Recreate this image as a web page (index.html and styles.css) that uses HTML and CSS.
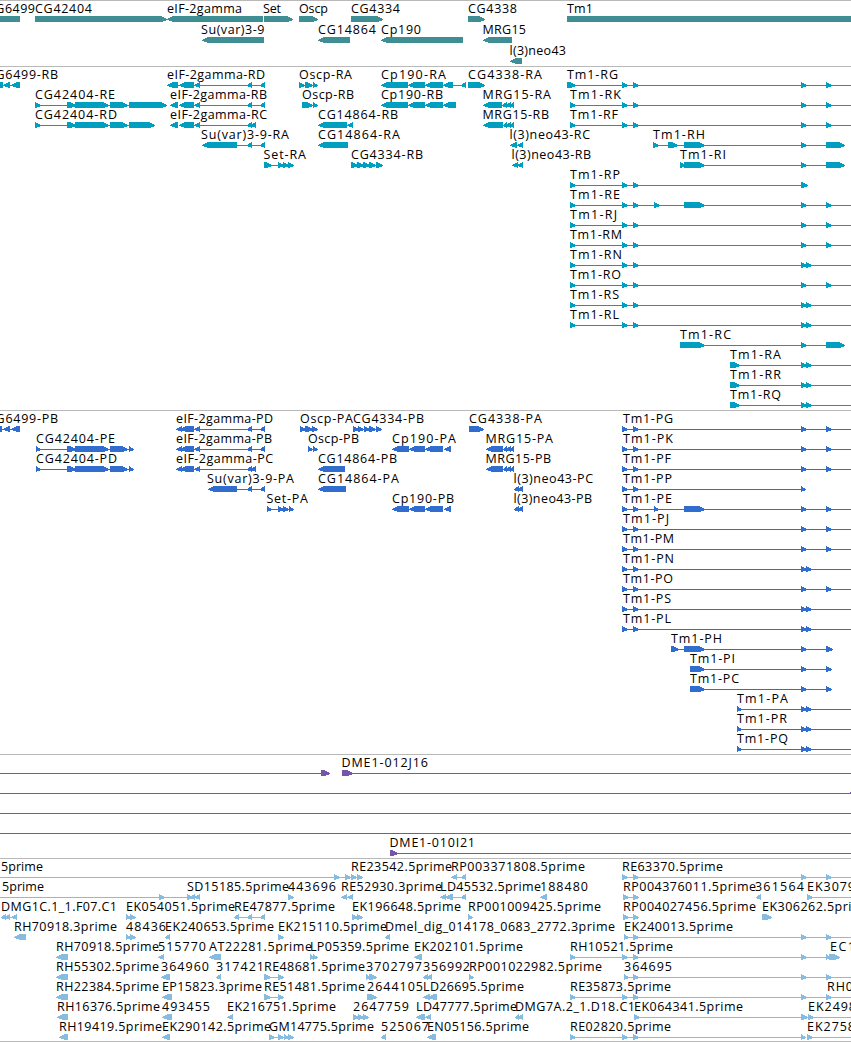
FILE: index.html
```html
<!DOCTYPE html>
<html lang="en">
<head>
<meta charset="utf-8">
<title>Genome browser</title>
<link rel="stylesheet" href="styles.css">
</head>
<body>
<main class="browser">
  <section class="track track-genes" data-track="genes"></section>
  <section class="track track-transcripts" data-track="transcripts"></section>
  <section class="track track-proteins" data-track="proteins"></section>
  <section class="track track-bacs" data-track="bacs"></section>
  <section class="track track-ests" data-track="ests"></section>
</main>
<script src="tracks.js"></script>
</body>
</html>
```
FILE: styles.css
```css
body {
  margin: 0;
  background: #fff;
}
.browser {
  display: flex;
  flex-direction: column;
  width: 851px;
  height: 1042px;
  overflow: hidden;
}
.track {
  display: flex;
  flex-direction: column;
  flex: none;
  border-top: 1px solid #b9b9b9;
  padding-bottom: 3px;
}
.row {
  display: block;
  flex: none;
  width: 851px;
  height: 20px;
  overflow: visible;
  fill: currentColor;
}
.track-genes { color: #3f8e94; padding-bottom: 2px; }
.track-genes .row { height: 21px; }
.track-transcripts { color: #009fc0; }
.track-proteins { color: #306dce; }
.track-bacs { color: #7656a8; }
.track-ests { color: #88bcde; padding-bottom: 2px; border-bottom: 1px solid #b9b9b9; }
.label {
  fill: #000;
  font-family: "Open Sans", "Noto Sans", sans-serif;
  font-size: 12.5px;
}
.shape { shape-rendering: crispEdges; }
```
FILE: tracks.js
```js
// Row tokens, separated by spaces:
//   x1:x2:name  label      a>b / a<b  stranded exon
//   a#b         plain bar  a-b        connecting line
const TM = '622>628 633>639';
const END = '801>807 826>832';
const PAIR = '801>807 806>812';
const EIF = '179<194 194<200 167-265 247<252 260<265';
const PEIF = '176<182 180<194 194<200';

const tracks = {
  genes: [
    '-13:35:CG6499 35:92:CG42404 167:242:eIF-2gamma 263:281:Set 299:328:Oscp 351:400:CG4334 468:517:CG4338 567:593:Tm1 0#20 35>167 167<263 264>293 299>318 351>383 468>485 567#851',
    '201:264.5:Su(var)3-9 318:376:CG14864 381:421:Cp190 482.5:526:MRG15 202<264 318<350 381<463 483<512',
    '509.5:566:l(3)neo43 510<522'
  ],
  transcripts: [
    `-13:58:CG6499-RB 167:265:eIF-2gamma-RD 299:352:Oscp-RA 381:446:Cp190-RA 468:542:CG4338-RA 567:618:Tm1-RG 0-20 0#3 3<10 11<20 167<178 ${EIF} 299>305 305>313 313>318 381<408 408<425 425<443 443<453 453-466 461<466 468>485 567>576 567-851 ${TM} ${END}`,
    `35:115:CG42404-RE 170:267:eIF-2gamma-RB 302:354:Oscp-RB 381:443:Cp190-RB 482.5:551:MRG15-RA 570:621:Tm1-RK 35-167 35>41 67>76 75>109 110>128 129>167 170<178 179<194 194<200 194-265 247<252 260<265 302>313 313>318 381<408 408<425 425<443 443<456 483<502 502<507 506<511 510<514 570>576 570-851 ${TM} ${END}`,
    `35:117:CG42404-RD 170:267:eIF-2gamma-RC 318:398:CG14864-RB 482.5:549:MRG15-RB 570:618:Tm1-RF 35-155 35>41 67>76 75>109 110>128 129>155 170<178 179<194 194<200 194-256 247<252 251<256 318<347 347<353 483<503 503<507 506<511 510<514 570>576 570-851 ${TM} ${END}`,
    `201:289:Su(var)3-9-RA 318:400:CG14864-RA 509.5:590:l(3)neo43-RC 653:705:Tm1-RH 202<237 237-265 247<252 260<265 318<348 510<517 517<523 653-845 653>659 668>678 684>705 801>807 826>845`,
    '263.5:306:Set-RA 351:423:CG4334-RB 511.5:591:l(3)neo43-RB 680:726:Tm1-RI 264-294 264>272 278>284 283>289 288>294 351>358 357>364 363>370 369>376 376>383 512<518 517<523 680-845 680>686 684>705 801>807 826>845',
    `570:620:Tm1-RP 570-808 570>576 ${TM} 801>808`,
    `570:620:Tm1-RE 570-851 570>576 ${TM} 654>660 684>705 ${END}`,
    `570:617:Tm1-RJ 570-851 570>576 ${TM} ${END}`,
    `570:622:Tm1-RM 570-851 570>576 ${TM} ${END}`,
    `570:622:Tm1-RN 570-851 570>576 ${TM} ${PAIR}`,
    `570:621:Tm1-RO 570-851 570>576 ${TM} ${END}`,
    `570:619:Tm1-RS 570-851 570>576 ${TM} ${PAIR}`,
    `570:619:Tm1-RL 570-851 570>576 ${TM} ${PAIR}`,
    '680:731:Tm1-RC 680-845 680>705 801>807 826>845',
    `730:781:Tm1-RA 730-851 730>740 ${PAIR}`,
    `730:781:Tm1-RR 730-851 730>740 ${PAIR}`,
    `730:781:Tm1-RQ 730-851 730>740 ${PAIR}`
  ],
  proteins: [
    `-13:58:CG6499-PB 176:273:eIF-2gamma-PD 300:353:Oscp-PA 353:424:CG4334-PB 469:542:CG4338-PA 623:673:Tm1-PG 0-20 0#2 3<10 11<20 ${PEIF} 194-265 247<252 260<265 300>306 305>313 312>318 353>359 358>364 364>370 369>376 376>382 469>484 623-851 ${TM} ${END}`,
    `36:115:CG42404-PE 176:272:eIF-2gamma-PB 308:359:Oscp-PB 392:456:Cp190-PA 485.5:553:MRG15-PA 623:673:Tm1-PK 36-134 36>41 67>76 75>109 110>128 129>134 ${PEIF} 194-265 247<252 260<265 308>313 313>318 392<409 409<425 425<443 444<451 486<503 503<507 506<511 510<514 623-851 ${TM} ${END}`,
    `36:117:CG42404-PD 176:273:eIF-2gamma-PC 318:397:CG14864-PB 485.5:551:MRG15-PB 623:671:Tm1-PF 36-134 36>41 67>76 75>109 110>128 129>134 ${PEIF} 194-256 247<252 251<256 318<345 486<503 503<507 506<511 510<514 623-851 ${TM} ${END}`,
    `207:294:Su(var)3-9-PA 318:399:CG14864-PA 513.5:593:l(3)neo43-PC 623:672:Tm1-PP 208<237 237-265 247<252 260<265 318<346 514<519 518<523 623-806 ${TM} 801>806`,
    `266.5:308:Set-PA 392:454:Cp190-PB 513.5:592:l(3)neo43-PB 623:672:Tm1-PE 267-294 267>272 278>284 283>289 289>294 392<409 409<425 425<443 444<451 514<519 518<523 623-851 ${TM} 654>659 684>705 ${END}`,
    `623:669:Tm1-PJ 623-851 ${TM} ${END}`,
    `623:674:Tm1-PM 623-851 ${TM} ${END}`,
    `623:674:Tm1-PN 623-851 ${TM} ${PAIR}`,
    `623:673:Tm1-PO 623-851 ${TM} ${END}`,
    `623:671:Tm1-PS 623-851 ${TM} ${PAIR}`,
    `623:671:Tm1-PL 623-851 ${TM} ${PAIR}`,
    '671:722:Tm1-PH 671-832 671>679 684>705 801>807 826>833',
    '690:735:Tm1-PI 690-832 690>705 801>807 826>832',
    '690:739:Tm1-PC 690-832 690>705 801>807 826>832',
    `737:788:Tm1-PA 737-851 737>742 ${PAIR}`,
    `737:787:Tm1-PR 737-851 737>742 ${PAIR}`,
    `737:788:Tm1-PQ 737-851 737>742 ${PAIR}`
  ],
  bacs: [
    '341.5:428:DME1-012J16 0-330 321>330 342>353 342-851',
    '0-851 849<855',
    '0-851',
    '0-851',
    '389.5:475:DME1-010I21 390>398 390-851'
  ],
  ests: [
    `1:43:5prime 351:452:RE23542.5prime 451:585:RP003371808.5prime 622:723:RE63370.5prime 0-351 334>340 345>351 351-363 351>357 357>363 451-466 451<457 461<466 622-851 ${TM} ${END}`,
    '2:44:5prime 187:289:SD15185.5prime 288:336:443696 341:442:RE52930.3prime 440:541:LD45532.5prime 540:588:188480 623:756:RP004376011.5prime 755:804:361564 807:855:EK3079 0-200 159>165 187>193 190<195 194<200 288>294 341-353 341<347 347<353 440-466 440<446 445<453 461<466 540<547 623-638 623>629 633>639 756<761 807>813 807-851',
    '1:117:DMG1C.1_1.F07.C1 126:235:EK054051.5prime 234:335:RE47877.5prime 352:461:EK196648.5prime 468:601:RP001009425.5prime 623:756:RP004027456.5prime 762:871:EK306262.5prime 1-17 1<6 5<10 11<17 126>131 130>136 234-265 234<239 247<252 260<265 352-363 352>358 357>363 468>473 623-638 623>629 633>639 762>772',
    `14:117:RH70918.3prime 126:166:48436 165:274:EK240653.5prime 278:387:EK215110.5prime 385:615:Dmel_dig_014178_0683_2772.3prime 624:733:EK240013.5prime 14<26 126>131 130>136 165<170 278>284 385<390 624-851 624>629 633>639 ${END}`,
    `56:159:RH70918.5prime 158:206:515770 209:312:AT22281.5prime 310:409:LP05359.5prime 414:523:EK202101.5prime 570:673:RH10521.5prime 830:855:EC1 56<68 158<164 209<221 310>315 313>318 414<422 570-831 570>576 ${TM} 801>807 826>831 829>840`,
    `56:159:RH55302.5prime 161:209:364960 216:264:317421 264:365:RE48681.5prime 366:422:3702797 423:470:356992 469:602:RP001022982.5prime 624:672:364695 56<68 161<170 216<221 264-284 264>271 278>284 366>370 369>377 423<428 427<432 469>474 624-851 624>629 633>639 ${END}`,
    `56:159:RH22384.5prime 162:262:EP15823.3prime 264:365:RE51481.5prime 367:423:2644105 423:524:LD26695.5prime 570:671:RE35873.5prime 827:853:RH0 56<68 162<172 264-284 264>271 278>284 367>377 423<430 428<437 570-851 570>576 ${TM} ${END}`,
    '57:160:RH16376.5prime 162:210:493455 227:336:EK216751.5prime 353:409:2647759 416:517:LD47777.5prime 515:635:DMG7A.2_1.D18.C1 634:743:EK064341.5prime 808:856:EK2498 57<68 162<172 227<233 353-369 353>359 358>364 363>369 416<425 425<431 515<519 518<523 634-851 634>640 801>808 808>814',
    `59:162:RH19419.5prime 162:271:EK290142.5prime 269:374:GM14775.5prime 381:429:525067 427:529:EN05156.5prime 570:671:RE02820.5prime 807:855:EK2758 59<68 162<170 269-294 269>275 278>284 284>289 288>294 381<386 427<436 570-806 570>576 ${TM} 801>806 807>813 807-851`
  ]
};

const NS = 'http://www.w3.org/2000/svg';
const TOP = 15, MID = 18, BOTTOM = 21, TIP = 6;

function add(parent, tag, attrs) {
  const el = document.createElementNS(NS, tag);
  for (const key in attrs) el.setAttribute(key, attrs[key]);
  parent.appendChild(el);
  return el;
}

function drawToken(svg, token) {
  const label = token.match(/^(-?[\d.]+):([\d.]+):(.+)$/);
  if (label) {
    const x = +label[1];
    add(svg, 'text', {
      class: 'label', x, y: 12, textLength: label[2] - x
    }).textContent = label[3];
    return;
  }
  const [, start, kind, stop] = token.match(/^(\d+)([<>#-])(\d+)$/);
  const a = +start, b = +stop;
  if (kind === '-' || kind === '#') {
    const line = kind === '-';
    add(svg, 'rect', {
      class: 'shape', x: a, y: line ? MID : TOP, width: b - a, height: line ? 1 : BOTTOM - TOP
    });
    return;
  }
  const tip = Math.min(TIP, b - a);
  const points = kind === '>'
    ? `${a},${TOP} ${b - tip},${TOP} ${b},${MID} ${b},${MID + 1} ${b - tip},${BOTTOM} ${a},${BOTTOM}`
    : `${b},${TOP} ${a + tip},${TOP} ${a},${MID} ${a},${MID + 1} ${a + tip},${BOTTOM} ${b},${BOTTOM}`;
  add(svg, 'polygon', { class: 'shape', points });
}

document.querySelectorAll('.track').forEach(section => {
  tracks[section.dataset.track].forEach(row => {
    const svg = add(section, 'svg', { class: 'row' });
    row.split(' ').forEach(token => drawToken(svg, token));
  });
});
```
